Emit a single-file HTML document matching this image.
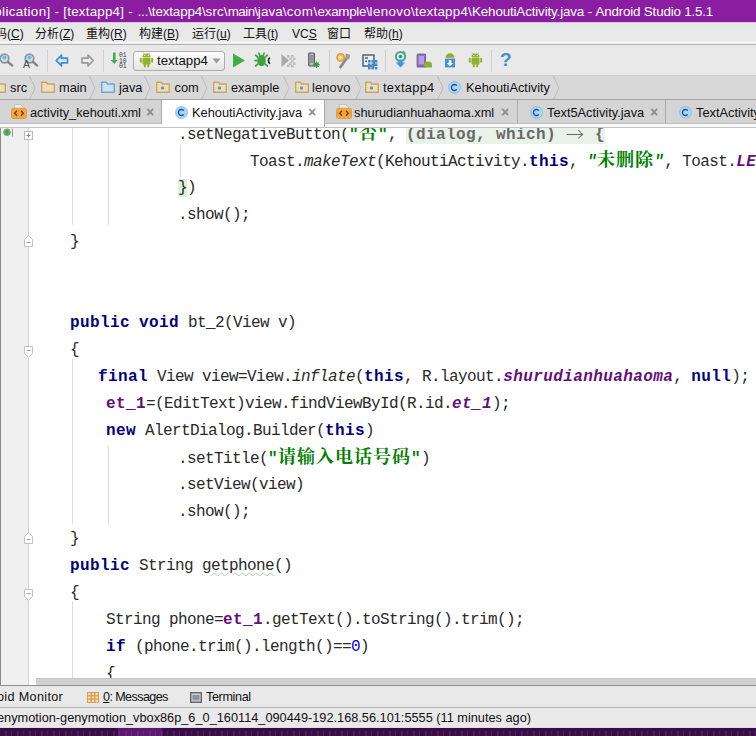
<!DOCTYPE html>
<html lang="zh">
<head>
<meta charset="utf-8">
<title>KehoutiActivity.java - Android Studio 1.5.1</title>
<style>
*{box-sizing:border-box;margin:0;padding:0}
html,body{width:756px;height:736px;overflow:hidden;background:#fff}
body{position:relative;font-family:"Liberation Sans","Noto Sans CJK SC",sans-serif;color:#000}
.ic{position:absolute;overflow:visible}
#title{position:absolute;left:0;top:0;width:756px;height:23px;background:#8b1da3;border-bottom:1px solid #dcbfe4;color:#fff;font-size:13.4px;line-height:24px;white-space:pre;overflow:hidden}
#title span{position:absolute;top:0}
#menu{position:absolute;left:0;top:23px;width:756px;height:21px;background:linear-gradient(#e3eae1 0,#e9e9e9 11px,#e9e9e9 18px,#f1f1f1 18px);overflow:hidden}
#menu span{position:absolute;top:1px;font-size:12px;line-height:20px;white-space:pre;color:#111}
#menu span u{font-size:12px;text-decoration:underline}
#menu span i{font-style:normal;font-size:12px}
#tool{position:absolute;left:0;top:44px;width:756px;height:31px;background:#e9e9e9;border-top:1px solid #b4b4b4;overflow:hidden}
#tool .sep{position:absolute;top:5px;width:1px;height:22px;background:#cfcfcf}
#tool .combo{position:absolute;left:133px;top:6px;width:92px;height:20px;border:1px solid #adadad;border-radius:3px;background:linear-gradient(#fdfdfd,#e4e4e4)}
#tool .ct{position:absolute;left:157px;top:6px;font-size:13.3px;line-height:20px;color:#111;white-space:pre}
#tool .q{position:absolute;left:500px;top:3px;font-size:19px;line-height:24px;font-weight:bold;color:#3f8fd0}
#crumb{position:absolute;left:0;top:75px;width:756px;height:24px;background:#d8d8d8;border-top:1px solid #cdcdcd;overflow:hidden}
#crumb .t{position:absolute;top:0;font-size:12.8px;line-height:23px;white-space:pre;color:#111}
#tabs{position:absolute;left:0;top:99px;width:756px;height:29px;background:#f8f8f8;border-top:1px solid #a2a2a2;border-bottom:1px solid #c4c4c4;overflow:hidden}
#tabs .tab{position:absolute;top:0;height:24px;background:#d4d4d4;border-right:1px solid #a9a9a9;border-bottom:1px solid #c0c0c0}
#tabs .tab.act{background:#fff;height:28px;border-bottom:0;border-right:1px solid #a9a9a9}
#tabs .t{position:absolute;top:1px;font-size:12.8px;line-height:23px;white-space:pre;color:#111}
#tabs .x{position:absolute;top:1px;font-size:14px;line-height:23px;color:#8a8a8a;font-weight:bold}
#ed{position:absolute;left:0;top:128px;width:756px;height:550px;background:#fff;overflow:hidden}
#edi{position:absolute;left:0;top:-1px;width:756px;height:552px}
#gut{position:absolute;left:0;top:0;width:29px;height:552px;background:#f0f0f0;border-right:1px solid #d4d4d4;border-left:1px solid #8c8c8c}
.ig{position:absolute;width:1px;background:#dedede}
.fm{position:absolute;left:24px;width:9px;height:9px;background:#fff;border:1px solid #b5b5b5}
.ln{position:absolute;height:27px;line-height:27px;white-space:pre;font-family:"Liberation Mono","Noto Serif CJK SC",monospace;font-size:16px;letter-spacing:-0.6px;color:#2a2a2a}
.ln b{letter-spacing:0.4px;color:#000080;font-weight:bold}
.ln i{font-style:italic}
.ln .f{color:#660e7a;font-weight:bold;letter-spacing:0.4px}
.ln .fi{color:#660e7a;font-weight:bold;font-style:italic;letter-spacing:0.4px}
.ln .s{color:#008000;font-weight:bold;letter-spacing:0.4px}
.ln .si{font-style:italic}
.ln .c{font-size:18px;letter-spacing:1px;font-style:normal}
.ln .n{color:#0000ff}
.ln .lam{background:#e8f2e8;color:#686868;font-weight:bold;letter-spacing:0.4px;padding:1.5px 0 0}
.ln .ar{font-family:"Noto Serif CJK SC",serif;font-size:18px;letter-spacing:1px;font-weight:bold;line-height:0;position:relative;top:2.5px}
.ln .br{background:#dff0e0}
.ln .wv{text-decoration:underline wavy #a9cfa9 1px;text-underline-offset:2px}
#hs{position:absolute;left:0;top:678px;width:756px;height:8px;background:linear-gradient(90deg,#8c8c8c 0,#8c8c8c 1px,#f0f0f0 1px,#f0f0f0 28px,#d4d4d4 28px,#d4d4d4 29px,#fff 29px);border-bottom:1px solid #8e8e8e}
#hs div{position:absolute;left:36px;top:0;width:720px;height:7px;background:#d0d0d0;border-top:1px solid #c6c6c6}
#bt{position:absolute;left:0;top:686px;width:756px;height:22px;background:#e9e9e9;border-bottom:1px solid #b4b4b4;overflow:hidden}
#bt span{position:absolute;top:0;font-size:12.6px;line-height:22px;white-space:pre;color:#111}
#st{position:absolute;left:0;top:708px;width:756px;height:20px;background:#e9e9e9;border-bottom:1px solid #e6d6ea;overflow:hidden}
#st span{position:absolute;left:-3px;top:0;font-size:12.76px;line-height:20px;white-space:pre;color:#111}
#dk{position:absolute;left:0;top:728px;width:756px;height:8px;background:linear-gradient(90deg,#3b0d47 0,#3b0d47 118px,#5c1a6f 118px,#5c1a6f 162px,#3b0d47 162px);overflow:hidden}
#dk div{position:absolute;left:0;top:3px;width:756px;height:5px;opacity:.22;background:repeating-linear-gradient(90deg,transparent 0,transparent 5px,#8a5a98 5px,#8a5a98 7px,transparent 7px,transparent 11px,#8a5a98 11px,#8a5a98 12px)}
</style>
</head>
<body>
<div id="title"><span style="left:-5.7px;letter-spacing:0.33px">plication] - </span><span style="left:63.3px;letter-spacing:0.21px">[textapp4] - </span><span style="left:137.5px;letter-spacing:-0.14px">...\textapp4\</span><span style="left:205.6px;letter-spacing:0.13px">src\</span><span style="left:227.7px;letter-spacing:-0.53px">main\</span><span style="left:257.8px;letter-spacing:0.12px">java\</span><span style="left:286.7px;letter-spacing:0.47px">com\</span><span style="left:317.6px;letter-spacing:-0.29px">example\</span><span style="left:369.6px;letter-spacing:0.32px">lenovo\</span><span style="left:415px;letter-spacing:0.21px">textapp4\</span><span style="left:472px;letter-spacing:-0.15px">KehoutiActivity.java - </span><span style="left:595.5px;letter-spacing:-0.19px">Android Studio 1.5.1</span></div>
<div id="menu">
<span style="left:-5px">码<i>(</i><u>C</u><i>)</i></span>
<span style="left:35px">分析<i>(</i><u>Z</u><i>)</i></span>
<span style="left:86px">重构<i>(</i><u>R</u><i>)</i></span>
<span style="left:139px">构建<i>(</i><u>B</u><i>)</i></span>
<span style="left:192px">运行<i>(</i><u>u</u><i>)</i></span>
<span style="left:243px">工具<i>(</i><u>t</u><i>)</i></span>
<span style="left:292px"><i>VC</i><u>S</u></span>
<span style="left:327px">窗口</span>
<span style="left:364px">帮助<i>(</i><u>h</u><i>)</i></span>
</div>
<div id="tool">
<svg class="ic" style="left:-2.5px;top:6px" width="16" height="18" viewBox="0 0 16 18"><circle cx="6.5" cy="7.5" r="4.3" fill="#c9dfee" stroke="#8d979f" stroke-width="1.7"/><circle cx="6.5" cy="6.6" r="2" fill="#7fb2d6"/><path d="M10 11L14.3 14.6" stroke="#858585" stroke-width="2.3" stroke-linecap="round"/></svg>
<svg class="ic" style="left:22.5px;top:6px" width="16" height="18" viewBox="0 0 16 18"><circle cx="6.5" cy="7.5" r="4.3" fill="#c9dfee" stroke="#8d979f" stroke-width="1.7"/><circle cx="6.5" cy="6.6" r="2" fill="#7fb2d6"/><path d="M10 11L14.3 14.6" stroke="#858585" stroke-width="2.3" stroke-linecap="round"/><text x="0" y="17.3" font-family="Liberation Sans,sans-serif" font-size="10.5" fill="#4a4a4a">A</text></svg>
<div class="sep" style="left:47px"></div>
<svg class="ic" style="left:55px;top:9px" width="14" height="13" viewBox="0 0 14 13"><path d="M6.5 1.2L1.2 6.5l5.3 5.3V8.8h6v-4.6h-6z" fill="#cfe6f7" stroke="#3b8fcf" stroke-width="1.7" stroke-linejoin="round"/></svg>
<svg class="ic" style="left:81px;top:9px" width="14" height="13" viewBox="0 0 14 13"><path d="M7 1.2l5.3 5.3L7 11.8V8.8H1v-4.6h6z" fill="#ececec" stroke="#9a9a9a" stroke-width="1.7" stroke-linejoin="round"/></svg>
<div class="sep" style="left:103px"></div>
<svg class="ic" style="left:110px;top:6px" width="17" height="18" viewBox="0 0 17 18"><path d="M3 1.5h2.6v7.5h2.2L4.3 13 0.8 9H3z" fill="#3daf4b"/><text x="9" y="6" font-family="Liberation Mono,monospace" font-size="6.3" fill="#3a3a3a">01</text><text x="9" y="11.5" font-family="Liberation Mono,monospace" font-size="6.3" fill="#3a3a3a">10</text><text x="9" y="17" font-family="Liberation Mono,monospace" font-size="6.3" fill="#3a3a3a">01</text></svg>
<div class="combo"></div>
<svg class="ic" style="left:139px;top:7px" width="15" height="16" viewBox="0 0 15 16"><g fill="#93b12c"><path d="M3.5 5.2a4 3.7 0 0 1 8 0z"/><rect x="3.5" y="5.8" width="8" height="6.7" rx="1"/><rect x="0.8" y="5.8" width="2" height="5" rx="1"/><rect x="12.2" y="5.8" width="2" height="5" rx="1"/><rect x="4.8" y="11.5" width="2" height="4" rx="1"/><rect x="8.2" y="11.5" width="2" height="4" rx="1"/><path d="M4.3 0.6l1.3 2M10.7 0.6l-1.3 2" stroke="#93b12c" stroke-width=".8"/></g><circle cx="5.8" cy="3.4" r=".6" fill="#fff"/><circle cx="9.2" cy="3.4" r=".6" fill="#fff"/></svg>
<span class="ct">textapp4</span>
<svg class="ic" style="left:212px;top:13px" width="9" height="6" viewBox="0 0 9 6"><path d="M0.5 0.5h8L4.5 5.5z" fill="#9a9a9a"/></svg>
<svg class="ic" style="left:232px;top:8px" width="14" height="15" viewBox="0 0 14 15"><path d="M1 0.5L13 7.5 1 14.5z" fill="#3fae49"/></svg>
<svg class="ic" style="left:255px;top:7px" width="16" height="16" viewBox="0 0 16 16"><ellipse cx="6.5" cy="8.6" rx="4.3" ry="5.6" fill="#3da244"/><path d="M2.6 5L0.6 3.2M10.4 5l2-1.8M2 8.6H0M2.6 12.2l-2 1.8M10.4 12.2l2 1.8M4.8 3.4L3.8 1.2M8.2 3.4l1-2.2" stroke="#3da244" stroke-width="1.7" stroke-linecap="round"/><path d="M15 5.6a3.6 3.6 0 0 0 0 6" fill="none" stroke="#2b2b2b" stroke-width="1.7"/></svg>
<svg class="ic" style="left:281px;top:8px" width="15" height="15" viewBox="0 0 15 15"><path d="M0.5 1L8 7.5 0.5 14z" fill="#a9a9a9"/><g fill="#bdbdbd"><rect x="6" y="2" width="2.5" height="2.5"/><rect x="10" y="2" width="2.5" height="2.5"/><rect x="8" y="4.5" width="2.5" height="2.5"/><rect x="12" y="4.5" width="2.5" height="2.5"/><rect x="10" y="7" width="2.5" height="2.5"/><rect x="8" y="9.5" width="2.5" height="2.5"/><rect x="12" y="9.5" width="2.5" height="2.5"/><rect x="6" y="11.5" width="2.5" height="2.5"/><rect x="10" y="12" width="2.5" height="2.5"/></g></svg>
<svg class="ic" style="left:308px;top:6px" width="14" height="18" viewBox="0 0 14 18"><rect x="0.8" y="2" width="5.6" height="13" rx="1" fill="#b8bcc0" stroke="#555" stroke-width="1.2"/><rect x="2" y="4" width="3.2" height="8" fill="#8d9399"/><path d="M8.5 10.5v6.4M5.3 13.7h6.4M6.3 11.5l4.4 4.4M10.7 11.5l-4.4 4.4" stroke="#2f9e44" stroke-width="1.2"/></svg>
<div class="sep" style="left:329px"></div>
<svg class="ic" style="left:335px;top:7px" width="16" height="17" viewBox="0 0 16 17"><path d="M13 4.5L5.5 15" stroke="#8a8a8a" stroke-width="2.8" stroke-linecap="round"/><path d="M10.5 1.5l4.5 1.2-.6 4.2-3.6.2z" fill="#9a9a9a"/><circle cx="5.6" cy="5.4" r="3.6" fill="#f5c968" stroke="#dc9f2e" stroke-width="1.6"/><circle cx="5.6" cy="5.4" r="1.2" fill="#fff7e0"/></svg>
<svg class="ic" style="left:362px;top:8.5px" width="16" height="16" viewBox="0 0 16 16"><rect x="1" y="1" width="11" height="11" fill="#e8eef3" stroke="#5a6a78" stroke-width="1.6"/><g fill="#3d8fd1"><rect x="6" y="6" width="2.6" height="2.6"/><rect x="9.4" y="6" width="2.6" height="2.6"/><rect x="12.8" y="6" width="2.6" height="2.6"/><rect x="6" y="9.4" width="2.6" height="2.6"/><rect x="9.4" y="9.4" width="2.6" height="2.6"/><rect x="12.8" y="9.4" width="2.6" height="2.6"/><rect x="6" y="12.8" width="2.6" height="2.6"/><rect x="9.4" y="12.8" width="2.6" height="2.6"/><rect x="12.8" y="12.8" width="2.6" height="2.6"/></g><rect x="3" y="3.2" width="3" height="1.6" fill="#5a6a78"/><rect x="3" y="6.5" width="2" height="1.6" fill="#5a6a78"/></svg>
<div class="sep" style="left:385px"></div>
<svg class="ic" style="left:392.5px;top:5px" width="15" height="18" viewBox="0 0 15 18"><circle cx="7.5" cy="6.5" r="4.6" fill="none" stroke="#4aa58d" stroke-width="2"/><circle cx="7.5" cy="6.5" r="1.8" fill="#2f8f78"/><path d="M5.5 9.5h4v3h2.8L7.5 17.5 2.7 12.5h2.8z" fill="#3c9bd6"/><path d="M10.5 0.5l2.5 3-3.6.6z" fill="#4aa58d"/></svg>
<svg class="ic" style="left:416px;top:6px" width="19" height="18" viewBox="0 0 19 18"><rect x="1.2" y="3" width="8.3" height="13" rx="1" fill="#8a63c7" stroke="#70708c" stroke-width="1.2"/><rect x="2.6" y="4.8" width="5.5" height="8.6" fill="#b99be6"/><path d="M8 14a4 3.4 0 0 1 8 0v2.5h-8z" fill="#8fae2a"/></svg>
<svg class="ic" style="left:444px;top:6px" width="13" height="18" viewBox="0 0 13 18"><path d="M1.5 6.8a4.5 4.5 0 0 1 9 0z" fill="#8fae2a"/><rect x="1" y="7.6" width="10" height="8.8" fill="#4a8fd2"/><path d="M4.8 9.2h2.6v2.8h1.8L6 15.2 2.9 12h1.9z" fill="#fff"/></svg>
<svg class="ic" style="left:468px;top:7px" width="15" height="16" viewBox="0 0 15 16"><g fill="#93b12c"><path d="M3.5 5.2a4 3.7 0 0 1 8 0z"/><rect x="3.5" y="5.8" width="8" height="6.7" rx="1"/><rect x="0.8" y="5.8" width="2" height="5" rx="1"/><rect x="12.2" y="5.8" width="2" height="5" rx="1"/><rect x="4.8" y="11.5" width="2" height="4" rx="1"/><rect x="8.2" y="11.5" width="2" height="4" rx="1"/><path d="M4.3 0.6l1.3 2M10.7 0.6l-1.3 2" stroke="#93b12c" stroke-width=".8"/></g><circle cx="5.8" cy="3.4" r=".6" fill="#fff"/><circle cx="9.2" cy="3.4" r=".6" fill="#fff"/></svg>
<div class="sep" style="left:491px"></div>
<span class="q">?</span>
</div>
<div id="crumb">
<svg class="ic" style="left:-8.5px;top:5px" width="14" height="12" viewBox="0 0 14 12"><path d="M0.7 1.2h4.6l1.4 1.8h6.6v8.3h-12.6z" fill="#eedfb8" stroke="#c6a668" stroke-width="1.4" stroke-linejoin="round"/></svg>
<span class="t" style="left:10px">src</span>
<svg class="ic" style="left:28.5px;top:0" width="7" height="24" viewBox="0 0 7 24"><path d="M0.5 0L6 12 0.5 24" fill="none" stroke="#bdbdbd" stroke-width="1"/></svg>
<svg class="ic" style="left:41px;top:5px" width="14" height="12" viewBox="0 0 14 12"><path d="M0.7 1.2h4.6l1.4 1.8h6.6v8.3h-12.6z" fill="#eedfb8" stroke="#c6a668" stroke-width="1.4" stroke-linejoin="round"/></svg>
<span class="t" style="left:59px">main</span>
<svg class="ic" style="left:89px;top:0" width="7" height="24" viewBox="0 0 7 24"><path d="M0.5 0L6 12 0.5 24" fill="none" stroke="#bdbdbd" stroke-width="1"/></svg>
<svg class="ic" style="left:101px;top:5px" width="14" height="12" viewBox="0 0 14 12"><path d="M0.7 1.2h4.6l1.4 1.8h6.6v8.3h-12.6z" fill="#cde3f2" stroke="#6fa6d0" stroke-width="1.4" stroke-linejoin="round"/></svg>
<span class="t" style="left:119px">java</span>
<svg class="ic" style="left:144px;top:0" width="7" height="24" viewBox="0 0 7 24"><path d="M0.5 0L6 12 0.5 24" fill="none" stroke="#bdbdbd" stroke-width="1"/></svg>
<svg class="ic" style="left:155.5px;top:5px" width="14" height="12" viewBox="0 0 14 12"><path d="M0.7 1.2h4.6l1.4 1.8h6.6v8.3h-12.6z" fill="#eedfb8" stroke="#c6a668" stroke-width="1.4" stroke-linejoin="round"/><circle cx="6.5" cy="7" r="1.7" fill="#5b9bd5"/></svg>
<span class="t" style="left:174.5px">com</span>
<svg class="ic" style="left:201px;top:0" width="7" height="24" viewBox="0 0 7 24"><path d="M0.5 0L6 12 0.5 24" fill="none" stroke="#bdbdbd" stroke-width="1"/></svg>
<svg class="ic" style="left:212.5px;top:5px" width="14" height="12" viewBox="0 0 14 12"><path d="M0.7 1.2h4.6l1.4 1.8h6.6v8.3h-12.6z" fill="#eedfb8" stroke="#c6a668" stroke-width="1.4" stroke-linejoin="round"/><circle cx="6.5" cy="7" r="1.7" fill="#5b9bd5"/></svg>
<span class="t" style="left:231px">example</span>
<svg class="ic" style="left:283px;top:0" width="7" height="24" viewBox="0 0 7 24"><path d="M0.5 0L6 12 0.5 24" fill="none" stroke="#bdbdbd" stroke-width="1"/></svg>
<svg class="ic" style="left:294.5px;top:5px" width="14" height="12" viewBox="0 0 14 12"><path d="M0.7 1.2h4.6l1.4 1.8h6.6v8.3h-12.6z" fill="#eedfb8" stroke="#c6a668" stroke-width="1.4" stroke-linejoin="round"/><circle cx="6.5" cy="7" r="1.7" fill="#5b9bd5"/></svg>
<span class="t" style="left:312px;letter-spacing:.15px">lenovo</span>
<svg class="ic" style="left:354.5px;top:0" width="7" height="24" viewBox="0 0 7 24"><path d="M0.5 0L6 12 0.5 24" fill="none" stroke="#bdbdbd" stroke-width="1"/></svg>
<svg class="ic" style="left:365px;top:5px" width="14" height="12" viewBox="0 0 14 12"><path d="M0.7 1.2h4.6l1.4 1.8h6.6v8.3h-12.6z" fill="#eedfb8" stroke="#c6a668" stroke-width="1.4" stroke-linejoin="round"/><circle cx="6.5" cy="7" r="1.7" fill="#5b9bd5"/></svg>
<span class="t" style="left:383px;letter-spacing:.3px">textapp4</span>
<svg class="ic" style="left:437px;top:0" width="7" height="24" viewBox="0 0 7 24"><path d="M0.5 0L6 12 0.5 24" fill="none" stroke="#bdbdbd" stroke-width="1"/></svg>
<svg class="ic" style="left:448px;top:5px" width="13" height="13" viewBox="0 0 13 13"><circle cx="6.5" cy="6.5" r="6" fill="#a9d6f2" stroke="#86bfe6" stroke-width=".9"/><path d="M8.8 4.6A3 3 0 1 0 8.8 8.4" fill="none" stroke="#1f4fa5" stroke-width="1.4"/></svg>
<span class="t" style="left:466px">KehoutiActivity</span>
<svg class="ic" style="left:553px;top:0" width="7" height="24" viewBox="0 0 7 24"><path d="M0.5 0L6 12 0.5 24" fill="none" stroke="#bdbdbd" stroke-width="1"/></svg>
</div>
<div id="tabs">
<div class="tab" style="left:0px;width:162px"></div>
<svg class="ic" style="left:10.5px;top:4px" width="16" height="15" viewBox="0 0 16 15"><path d="M3.5 0.5h6l3 3v4h-9z" fill="#e6edf5" stroke="#a9b9cc" stroke-width=".8"/><rect x="0.5" y="4.2" width="15" height="10.3" rx="2" fill="#f2a642" stroke="#e0922c" stroke-width=".8"/><path d="M6 6.8L3.7 9.3 6 11.8M10 6.8l2.3 2.5L10 11.8" fill="none" stroke="#7a3d00" stroke-width="1.4"/></svg>
<span class="t" style="left:30px">activity_kehouti.xml</span>
<span class="x" style="left:146px">×</span>
<div class="tab act" style="left:162px;width:163px"></div>
<svg class="ic" style="left:174.5px;top:6px" width="13" height="13" viewBox="0 0 13 13"><circle cx="6.5" cy="6.5" r="6" fill="#a9d6f2" stroke="#86bfe6" stroke-width=".9"/><path d="M8.8 4.6A3 3 0 1 0 8.8 8.4" fill="none" stroke="#1f4fa5" stroke-width="1.4"/></svg>
<span class="t" style="left:192px">KehoutiActivity.java</span>
<span class="x" style="left:308px">×</span>
<div class="tab" style="left:325px;width:193px"></div>
<svg class="ic" style="left:335.5px;top:4px" width="16" height="15" viewBox="0 0 16 15"><path d="M3.5 0.5h6l3 3v4h-9z" fill="#e6edf5" stroke="#a9b9cc" stroke-width=".8"/><rect x="0.5" y="4.2" width="15" height="10.3" rx="2" fill="#f2a642" stroke="#e0922c" stroke-width=".8"/><path d="M6 6.8L3.7 9.3 6 11.8M10 6.8l2.3 2.5L10 11.8" fill="none" stroke="#7a3d00" stroke-width="1.4"/></svg>
<span class="t" style="left:354px">shurudianhuahaoma.xml</span>
<span class="x" style="left:501px">×</span>
<div class="tab" style="left:518px;width:148px"></div>
<svg class="ic" style="left:529.5px;top:6px" width="13" height="13" viewBox="0 0 13 13"><circle cx="6.5" cy="6.5" r="6" fill="#a9d6f2" stroke="#86bfe6" stroke-width=".9"/><path d="M8.8 4.6A3 3 0 1 0 8.8 8.4" fill="none" stroke="#1f4fa5" stroke-width="1.4"/></svg>
<span class="t" style="left:547px">Text5Activity.java</span>
<span class="x" style="left:650px">×</span>
<div class="tab" style="left:666px;width:94px"></div>
<svg class="ic" style="left:678.5px;top:6px" width="13" height="13" viewBox="0 0 13 13"><circle cx="6.5" cy="6.5" r="6" fill="#a9d6f2" stroke="#86bfe6" stroke-width=".9"/><path d="M8.8 4.6A3 3 0 1 0 8.8 8.4" fill="none" stroke="#1f4fa5" stroke-width="1.4"/></svg>
<span class="t" style="left:696px">TextActivity.java</span>
</div>
<div id="ed"><div id="edi">
<div id="gut"></div>
<div class="ig" style="left:72px;top:0px;height:98px"></div>
<div class="ig" style="left:108px;top:0px;height:98px"></div>
<div class="ig" style="left:180px;top:18px;height:32px"></div>
<div class="ig" style="left:72px;top:231.5px;height:165.5px"></div>
<div class="ig" style="left:108px;top:319px;height:78px"></div>
<div class="ig" style="left:72px;top:473.5px;height:78.5px"></div>
<svg class="ic" style="left:3px;top:1px" width="11" height="9" viewBox="0 0 11 9"><circle cx="4" cy="4.3" r="3.8" fill="#6cb66c"/><path d="M4 2.3v4M2.6 4.3a1.4 1.8 0 0 0 2.8 0a1.4 1.8 0 0 0 -2.8 0" fill="none" stroke="#3f8a3f" stroke-width=".8"/><path d="M9.5 0.5v8" stroke="#9a9a9a" stroke-width="1"/></svg>
<svg class="ic" style="left:24px;top:3.5px" width="9" height="9" viewBox="0 0 9 9"><rect x=".5" y=".5" width="8" height="8" fill="#fff" stroke="#bababa"/><path d="M2.5 4.5h4M4.5 2.5v4" stroke="#8a8a8a" stroke-width="1"/></svg>
<svg class="ic" style="left:24px;top:108px" width="9" height="12" viewBox="0 0 9 12"><path d="M.5 11.5h8v-7L4.5 .5 .5 4.5z" fill="#fff" stroke="#c2c2c2"/><path d="M2.5 7.5h4" stroke="#a0a0a0" stroke-width="1"/></svg>
<svg class="ic" style="left:24px;top:219px" width="9" height="12" viewBox="0 0 9 12"><path d="M.5 .5h8v7L4.5 11.5 .5 7.5z" fill="#fff" stroke="#c2c2c2"/><path d="M2.5 4.5h4" stroke="#a0a0a0" stroke-width="1"/></svg>
<svg class="ic" style="left:24px;top:405px" width="9" height="12" viewBox="0 0 9 12"><path d="M.5 11.5h8v-7L4.5 .5 .5 4.5z" fill="#fff" stroke="#c2c2c2"/><path d="M2.5 7.5h4" stroke="#a0a0a0" stroke-width="1"/></svg>
<svg class="ic" style="left:24px;top:462px" width="9" height="12" viewBox="0 0 9 12"><path d="M.5 .5h8v7L4.5 11.5 .5 7.5z" fill="#fff" stroke="#c2c2c2"/><path d="M2.5 4.5h4" stroke="#a0a0a0" stroke-width="1"/></svg>
<div class="ln" style="left:178px;top:-6.5px">.setNegativeButton(<span class="s">"<span class="c">否</span>"</span>, <span class="lam">(dialog, which) <span class="ar">→</span> {</span></div>
<div class="ln" style="left:250px;top:20.5px">Toast.<i>makeText</i>(KehoutiActivity.<b>this</b>, <span class="s si">"<span class="c">未删除</span>"</span>, Toast.<span class="fi">LE</span></div>
<div class="ln" style="left:178px;top:47.5px"><span class="br">}</span>)</div>
<div class="ln" style="left:178px;top:74.5px">.show();</div>
<div class="ln" style="left:70px;top:101.5px">}</div>
<div class="ln" style="left:70px;top:182.5px"><b>public</b> <b>void</b> bt_2(View v)</div>
<div class="ln" style="left:70px;top:209.5px">{</div>
<div class="ln" style="left:98px;top:236.5px"><b>final</b> View view=View.<i>inflate</i>(<b>this</b>, R.layout.<span class="fi">shurudianhuahaoma</span>, <b>null</b>);</div>
<div class="ln" style="left:106px;top:263.5px"><span class="f">et_1</span>=(EditText)view.findViewById(R.id.<span class="fi">et_1</span>);</div>
<div class="ln" style="left:106px;top:290.5px"><b>new</b> AlertDialog.Builder(<b>this</b>)</div>
<div class="ln" style="left:178px;top:317.5px">.setTitle(<span class="s">"<span class="c">请输入电话号码</span>"</span>)</div>
<div class="ln" style="left:178px;top:344.5px">.setView(view)</div>
<div class="ln" style="left:178px;top:371.5px">.show();</div>
<div class="ln" style="left:70px;top:398.5px">}</div>
<div class="ln" style="left:70px;top:425.5px"><b>public</b> String <span class="wv">getphone</span>()</div>
<div class="ln" style="left:70px;top:452.5px">{</div>
<div class="ln" style="left:106px;top:479.5px">String phone=<span class="f">et_1</span>.getText().toString().trim();</div>
<div class="ln" style="left:106px;top:506.5px"><b>if</b> (phone.trim().length()==<span class="n">0</span>)</div>
<div class="ln" style="left:106px;top:533.5px">{</div>

</div></div>
<div id="hs"><div></div></div>
<div id="bt">
<span style="left:-3px;letter-spacing:.35px">oid Monitor</span>
<svg class="ic" style="left:87px;top:6px" width="12" height="11" viewBox="0 0 12 11"><rect x=".5" y=".5" width="11" height="10" fill="#f6d9a8" stroke="#d9a25a"/><path d="M.5 3.8h11M.5 7.2h11M4.2 .5v10M7.8 .5v10" stroke="#d08a3c" stroke-width=".9"/></svg>
<span style="left:103px;letter-spacing:-.6px"><u>0</u>: Messages</span>
<svg class="ic" style="left:190px;top:6px" width="12" height="11" viewBox="0 0 12 11"><rect x=".7" y=".7" width="10.6" height="9.6" fill="#c9ccd0" stroke="#5a5f66" stroke-width="1.3"/><rect x="2.5" y="3" width="7" height="5.2" fill="#8d939a"/></svg>
<span style="left:206px;letter-spacing:-.35px">Terminal</span>
</div>
<div id="st"><span>enymotion-genymotion_vbox86p_6_0_160114_090449-192.168.56.101:5555 (11 minutes ago)</span></div>
<div id="dk"><div></div></div>
</body>
</html>
